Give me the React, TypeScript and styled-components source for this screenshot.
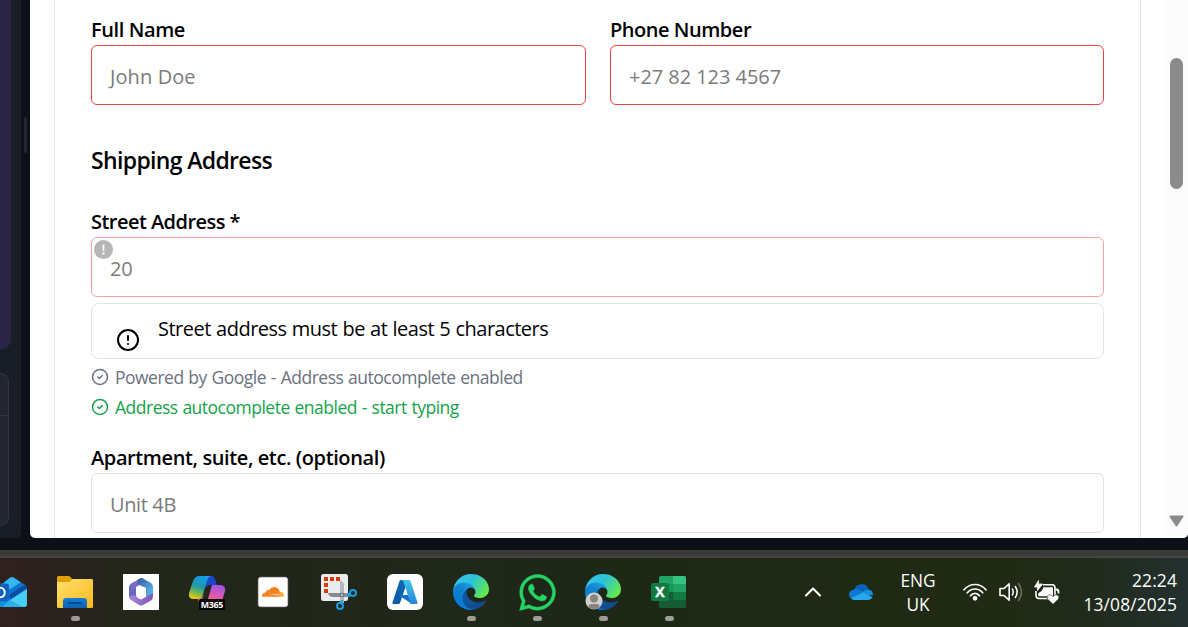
import React from 'react';
import styled, { createGlobalStyle } from 'styled-components';
import { CircleAlert, CircleCheck, ChevronUp } from 'lucide-react';
import { FaWhatsapp } from 'react-icons/fa';

const Global = createGlobalStyle`
  * { box-sizing: border-box; }
  body { margin: 0; background: #0e1018; overflow: hidden; }
  #root { font-family: "Open Sans", "Noto Sans", sans-serif; }
`;

const Screen = styled.div`
  width: 1188px;
  height: 627px;
  display: flex;
  flex-direction: column;
  background: #0e1018;
  overflow: hidden;
`;
const Workspace = styled.div`
  display: flex;
  height: 538px;
`;
const ChatRail = styled.aside`
  width: 21px;
  height: 538px;
  background: #191d25;
  border-bottom-right-radius: 5px;
  display: flex;
  flex-direction: column;
`;
const Message = styled.div`
  width: 11px;
  height: 350px;
  background: #2a2545;
  border-bottom-right-radius: 11px;
`;
const Composer = styled.div`
  width: 9px;
  height: 153px;
  margin-top: 23px;
  background: #23262e;
  border: 1px solid #333640;
  border-left: 0;
  border-radius: 0 11px 11px 0;
`;
const ComposerHead = styled.div`
  height: 42px;
  border-bottom: 1px solid #333640;
`;
const Splitter = styled.div`
  width: 9px;
  padding: 117px 3px 0;
`;
const Grip = styled.div`
  height: 36px;
  border-radius: 2px;
  background: #242630;
`;
const Preview = styled.main`
  flex: 1;
  display: flex;
  background: #fff;
  border-radius: 0 0 5px 5px;
  overflow: hidden;
`;
const PreviewBody = styled.div`
  width: 1135px;
  padding: 0 24px;
`;
const Card = styled.section`
  width: 1087px;
  height: 538px;
  padding: 15px 36px 0;
  border: 1px solid #e4e4e7;
  border-width: 0 1px;
  overflow: hidden;
`;
const Columns = styled.div`
  display: grid;
  grid-template-columns: 495px 494px;
  gap: 24px;
`;
const Field = styled.div`
  display: flex;
  flex-direction: column;
`;
const Label = styled.label<{ $track?: number }>`
  height: 30px;
  line-height: 29px;
  font-size: 20px;
  font-weight: 600;
  letter-spacing: ${p => p.$track ?? 0}px;
  color: #020204;
  white-space: nowrap;
`;
const Box = styled.div<{ $tone?: string; $track?: number }>`
  height: 60px;
  display: flex;
  align-items: center;
  padding: 2px 18px 0;
  border: 1px solid ${p => p.$tone ?? '#e4e4e7'};
  border-radius: 6px;
  font-size: 20px;
  letter-spacing: ${p => p.$track ?? 0}px;
  color: #7b7b7b;
  white-space: nowrap;
  position: relative;
`;
const Badge = styled.span`
  position: absolute;
  left: 2px;
  top: 2px;
  width: 19px;
  height: 19px;
  svg { display: block; }
`;
const Heading = styled.h3`
  margin: 38px 0 28px;
  height: 36px;
  line-height: 35px;
  font-size: 23px;
  font-weight: 600;
  letter-spacing: -0.65px;
  color: #020204;
  white-space: nowrap;
`;
const Alert = styled.div`
  height: 56px;
  margin-top: 6px;
  padding: 0 24px;
  border: 1px solid #e4e4e7;
  border-radius: 8px;
  display: flex;
  gap: 18px;
  font-size: 20px;
  letter-spacing: -0.5px;
  word-spacing: 0.5px;
  line-height: 50px;
  color: #020204;
  white-space: nowrap;
  svg { margin-top: 24px; }
`;
const Hints = styled.div`
  padding: 3px 0 21px;
`;
const Hint = styled.div<{ $tone: string }>`
  height: 30px;
  display: flex;
  align-items: center;
  gap: 6px;
  font-size: 17.5px;
  letter-spacing: -0.5px;
  word-spacing: 0.7px;
  color: ${p => p.$tone};
  white-space: nowrap;
`;
const Scrollbar = styled.div`
  width: 23px;
  background: #fcfcfc;
  display: flex;
  flex-direction: column;
  align-items: center;
  justify-content: space-between;
  padding: 58px 0 11px;
`;
const Thumb = styled.div`
  width: 13px;
  height: 131px;
  border-radius: 7px;
  background: #8b8b8b;
`;
const WindowEdge = styled.div`
  height: 8px;
  margin-top: 12px;
  background: linear-gradient(#3a3a39 0 6px, #454643 6px 8px);
`;
const Taskbar = styled.footer`
  height: 69px;
  display: flex;
  justify-content: space-between;
  background: linear-gradient(90deg, #31211e 0, #2a221d 60px, #24251b 110px, #22271a 180px, #21261b 300px, #1f2819 450px, #1e2816 650px, #1f2913 900px, #202a14 1010px, #212b1c 1090px, #22302f 1188px);
  color: #fff;
`;
const Apps = styled.div`
  display: flex;
  margin-left: -24px;
`;
const AppSlot = styled.div`
  width: 66px;
  padding-top: 16px;
  display: flex;
  flex-direction: column;
  align-items: center;
  gap: 6px;
  svg { display: block; overflow: visible; }
`;
const WhatsApp = styled(FaWhatsapp)`
  margin: -2.5px 0;
  color: #25d366;
  stroke: #25d366;
  stroke-width: 6px;
`;
const Running = styled.i`
  width: 9px;
  height: 5px;
  border-radius: 3px;
  background: #9d9b97;
`;
const Tray = styled.div`
  display: flex;
  align-items: center;
  height: 68px;
  padding-right: 11px;
`;
const TrayItem = styled.div<{ $w: number; $gap: number }>`
  width: ${p => p.$w}px;
  margin-right: ${p => p.$gap}px;
  display: flex;
  justify-content: center;
  svg { display: block; overflow: visible; flex: none; }
`;
const TrayText = styled.div<{ $w: number; $gap?: number; $top?: number; $align: string; $size: number; $track?: number }>`
  width: ${p => p.$w}px;
  margin-right: ${p => p.$gap ?? 0}px;
  padding-top: ${p => p.$top ?? 0}px;
  text-align: ${p => p.$align};
  font-size: ${p => p.$size}px;
  letter-spacing: ${p => p.$track ?? 0}px;
  line-height: 24px;
  white-space: nowrap;
`;

const Outlook = () => (
  <svg width="36" height="36" viewBox="0 0 36 36">
    <path d="M6 14 18 4.500Q21 2 24 4.500L34 11Q36 12.500 36 15V30Q36 33 33 33H9Q6 33 6 30Z" fill="#1490df" />
    <path d="M10 11 18 4.500Q21 2 24 4.500L30 8.500 19 15.500 17 11Z" fill="#35b8f1" />
    <path d="M30 8.500 34 11Q36 12.500 36 14.500L19 26 18 20Z" fill="#0a4da2" />
    <path d="M18 16 29 8.800 34 10.500 18 21Z" fill="#0f74cf" />
    <path d="M36 15V30Q36 33 33 33H12L19 26Z" fill="#46cdf8" />
    <path d="M19 26 32 33H12Z" fill="#2cb0ec" />
    <rect x="0" y="9.500" width="18" height="18" rx="2.500" fill="#0f62c4" />
    <ellipse cx="9.500" cy="18.500" rx="4.200" ry="4.800" fill="none" stroke="#fff" strokeWidth="2" />
  </svg>
);
const Folder = () => (
  <svg width="36" height="36" viewBox="0 0 36 36">
    <defs>
      <linearGradient id="fo" x1="0" y1="0" x2="1" y2="1"><stop stopColor="#ffdf6e" /><stop offset="1" stopColor="#fbb91b" /></linearGradient>
      <linearGradient id="fb" x1="0" y1="0" x2="0" y2="1"><stop stopColor="#157fd8" /><stop offset="1" stopColor="#0d62b2" /></linearGradient>
    </defs>
    <path d="M0 3.500Q0 2 1.500 2H11Q12.500 2 13.500 3L15 5H34Q36 5 36 7V16H0Z" fill="#e0a105" />
    <path d="M0 8H12L16 5H34.500Q36 5 36 6.500V32.500Q36 34 34.500 34H1.500Q0 34 0 32.500Z" fill="url(#fo)" />
    <path d="M6 34V27Q6 24 9 24H27Q30 24 30 27V34Z" fill="url(#fb)" />
    <path d="M11.500 29H24.500" stroke="#08488f" strokeWidth="1.800" strokeLinecap="round" />
  </svg>
);
const Office = () => (
  <svg width="36" height="36" viewBox="0 0 36 36">
    <defs>
      <linearGradient id="o1" x1="0" y1="0" x2="0" y2="1"><stop stopColor="#8e72cf" /><stop offset="1" stopColor="#4d62b4" /></linearGradient>
      <linearGradient id="o2" x1="0" y1="0" x2="1" y2="1"><stop stopColor="#3a58a8" /><stop offset="1" stopColor="#5ac6ef" /></linearGradient>
      <linearGradient id="o3" x1="0" y1="0" x2="1" y2="0"><stop stopColor="#a986dd" /><stop offset="1" stopColor="#7d55b8" /></linearGradient>
    </defs>
    <path d="M36 0H0V36H36Z" fill="#fff" />
    <path d="M18 4 8 9.500Q6 11 6 13V23L13 27V13L21 8.500V5Q19.500 3.500 18 4Z" fill="url(#o1)" />
    <path d="M15 5.500 18 4Q19 4 20 4.500L28 9Q30 10.500 30 13V21L23 24V14L14 10Z" fill="url(#o2)" />
    <path d="M6 22Q6 25 8 26L16 31Q18 32 20 31L28 26.500Q30 25 30 22V19L19 25Q17 26 15 24L12 21Z" fill="url(#o3)" />
    <circle cx="18" cy="17.700" r="5" fill="#fff" />
  </svg>
);
const Copilot = () => (
  <svg width="36" height="36" viewBox="0 0 36 36">
    <defs>
      <linearGradient id="c1" x1="0.600" y1="0" x2="0.300" y2="1"><stop stopColor="#159bea" /><stop offset="0.450" stopColor="#2098a8" /><stop offset="0.750" stopColor="#75bd48" /><stop offset="1" stopColor="#f4c916" /></linearGradient>
      <linearGradient id="c2" x1="0.700" y1="0" x2="0.300" y2="1"><stop stopColor="#a553e6" /><stop offset="0.500" stopColor="#e35aa5" /><stop offset="1" stopColor="#ff8d5c" /></linearGradient>
    </defs>
    <path d="M17 2H22Q25 2 26 5L28 11H22Q19 11 18 15L14 10Z" fill="#1b46c9" />
    <path d="M11 2H22Q19 3 18 7L14 20Q13 25 9 25H5Q-1 25 0 19L4 7Q6 2 11 2Z" fill="url(#c1)" />
    <path d="M22 11H31Q37 11 36 17L33 27Q31 33 26 33H14Q11 33 9 25 13 25 15 20L18 13Q18 11 22 11Z" fill="url(#c2)" />
    <path d="M20 11H23L19 25H13Q14 24 15 20L17 14Q18 11 20 11Z" fill="#25261e" />
    <rect x="10" y="25" width="26" height="11" rx="1.500" fill="#050505" />
    <text x="23" y="33.700" textAnchor="middle" fontFamily="Open Sans, sans-serif" fontWeight="700" fontSize="8.800" fill="#fff" textLength="22.500">M365</text>
  </svg>
);
const Cloudflare = () => (
  <svg width="36" height="36" viewBox="0 0 36 36">
    <rect x="3.300" y="3.300" width="29.400" height="29.400" rx="2.500" fill="#fff" stroke="#d5d5d3" strokeWidth="0.600" />
    <path d="M7 22.800Q7 18.500 11 18.200 11 15.500 14 16.200 16 13 19 13 23 13 24.500 17L25.500 20 24 22.800Z" fill="#f48120" />
    <path d="M23 22.800 25 17.500Q29 18 29 22.800Z" fill="#faad3f" />
    <path d="M13 20.500 24 20 22.500 21.200Z" fill="#fff" opacity="0.750" />
  </svg>
);
const Snip = () => (
  <svg width="36" height="36" viewBox="0 0 36 36">
    <rect x="0" y="0" width="27" height="27" rx="2.500" fill="#e9ebef" />
    <path d="M3 3h4v4h-4zM9 3h4v4h-4zM15 3h4v4h-4zM3 9h4v4h-4zM3 15h4v4h-4z" fill="#d83b01" />
    <path d="M20 7Q23 8 23 11V29H19V7Z" fill="#b4b8be" />
    <path d="M7 19H29V23H12Q8 23 7 19Z" fill="#858c94" />
    <path d="M19 19h4v4h-4z" fill="#70777f" />
    <circle cx="21" cy="21" r="0.900" fill="#e3e5e8" />
    <path d="M26 21.500 29 20.500M21 26V28.500" stroke="#1b9be3" strokeWidth="2.500" />
    <circle cx="32" cy="19" r="3" fill="none" stroke="#1b9be3" strokeWidth="2" />
    <circle cx="19" cy="32" r="3" fill="none" stroke="#1b9be3" strokeWidth="2" />
  </svg>
);
const Azure = () => (
  <svg width="36" height="36" viewBox="0 0 36 36">
    <defs>
      <linearGradient id="a1" x1="0" y1="0" x2="0" y2="1"><stop stopColor="#1268b4" /><stop offset="1" stopColor="#0b5aa6" /></linearGradient>
      <linearGradient id="a2" x1="0" y1="0" x2="0" y2="1"><stop stopColor="#3fc5ee" /><stop offset="1" stopColor="#2487d8" /></linearGradient>
    </defs>
    <rect width="36" height="36" rx="6" fill="#fff" />
    <path d="M14 6H21L13 29Q12.500 30 11.500 30H6.500Q5 30 5.500 28.500L12.500 7Q13 6 14 6Z" fill="url(#a1)" />
    <path d="M12 21H21L25 30 13 22Z" fill="#0f6fc4" />
    <path d="M14.500 6H21.500Q23 6 23.500 7.200L30.500 28.500Q31 30 29.500 30H22.500Q24 29.500 23.300 28L16.500 8Q16 6.500 14.500 6Z" fill="url(#a2)" />
  </svg>
);
const Edge = ({ id, profile }: { id: string; profile?: boolean }) => (
  <svg width="36" height="36" viewBox="0 0 36 36">
    <defs>
      <linearGradient id={id + 'a'} x1="0.200" y1="0" x2="1" y2="0.400"><stop stopColor="#0c59a4" /><stop offset="1" stopColor="#114a8b" /></linearGradient>
      <linearGradient id={id + 'b'} x1="0.800" y1="0.200" x2="0.200" y2="1"><stop stopColor="#1b9de2" /><stop offset="0.300" stopColor="#1384ce" /><stop offset="1" stopColor="#0078d8" /></linearGradient>
      <linearGradient id={id + 'c'} x1="0" y1="0.200" x2="1" y2="0.700"><stop stopColor="#35c1f1" /><stop offset="0.450" stopColor="#2cc3d5" /><stop offset="1" stopColor="#66eb43" /></linearGradient>
    </defs>
    <g transform="scale(0.1406)">
      <path fill={`url(#${id}a)`} d="M230.330 190.460c-3.400 1.800-6.900 3.360-10.500 4.700a101.700 101.700 0 0 1-35.900 6.460c-47.300 0-88.500-32.540-88.500-74.300a31.480 31.480 0 0 1 16.430-27.300c-42.800 1.800-53.800 46.400-53.800 72.530 0 73.880 68.090 81.370 82.760 81.370 7.910 0 19.840-2.300 27-4.560l1.310-.44a128.340 128.340 0 0 0 66.600-52.800 4 4 0 0 0-5.400-5.660z" />
      <path fill={`url(#${id}b)`} d="M105.730 241.420a79.200 79.200 0 0 1-22.740-21.340 80.720 80.720 0 0 1 28.870-120.040c3.120-1.470 8.450-4.130 15.540-4a32.350 32.350 0 0 1 25.690 13 31.880 31.880 0 0 1 6.360 18.660c0-.21 24.460-79.600-80-79.600-43.900 0-79.450 41.660-79.450 78.210a130.150 130.150 0 0 0 12.110 56 128 128 0 0 0 156.380 67.110 75.550 75.550 0 0 1-62.760-8z" />
      <path fill={`url(#${id}c)`} d="M152.330 148.860c-.81 1.050-3.300 2.500-3.300 5.660 0 2.610 1.700 5.120 4.720 7.230 14.380 10 41.490 8.680 41.560 8.680a59.560 59.560 0 0 0 30.270-8.350 61.380 61.380 0 0 0 30.430-52.880c.26-22.410-8-37.310-11.340-43.910C223.460 23.840 177.720 0 128 0A128 128 0 0 0 0 126.200c.48-36.540 36.800-66.050 80-66.050 3.500 0 23.460.34 42 10.070 16.340 8.580 24.900 18.940 30.850 29.210 6.180 10.670 7.280 24.150 7.280 29.520 0 5.370-2.740 13.330-7.800 19.910z" />
    </g>
    {profile && (
      <g>
        <circle cx="9" cy="27" r="8.500" fill="#d2d0ce" />
        <circle cx="9" cy="24.500" r="4" fill="#8a8480" />
        <path d="M3.500 33.200Q3.500 30 6 30H12Q14.500 30 14.500 33.200 9 37 3.500 33.200Z" fill="#8a8480" />
      </g>
    )}
  </svg>
);
const Excel = () => (
  <svg width="36" height="36" viewBox="0 0 36 36">
    <path d="M10 2H22V10H8V4Q8 2 10 2Z" fill="#21a366" />
    <path d="M22 2H33.500Q35 2 35 3.500V10H22Z" fill="#33c481" />
    <path d="M8 10H22V18H8Z" fill="#1b9659" />
    <path d="M22 10H35V18H22Z" fill="#21a366" />
    <path d="M8 18H22V26H8Z" fill="#185c37" />
    <path d="M22 18H35V26H22Z" fill="#107c41" />
    <path d="M8 26H35V32.500Q35 34 33.500 34H9.500Q8 34 8 32.500Z" fill="#185c37" />
    <rect x="0" y="9" width="18" height="18" rx="1.500" fill="#10793f" />
    <text x="9" y="22.900" textAnchor="middle" fontFamily="Open Sans, sans-serif" fontWeight="700" fontSize="14" fill="#fff" stroke="#fff" strokeWidth="0.400">X</text>
  </svg>
);
const OneDrive = () => (
  <svg width="24" height="16" viewBox="0 0 24 16">
    <path d="M5 6Q7 0 13 0 18 0 20 6L14 10Z" fill="#0a62ba" />
    <path d="M5 5.500Q9 4.500 12 7L18 10 4 15.500Q0 14 0 10.500 0 6.500 5 5.500Z" fill="#0f78d4" />
    <path d="M12 8.500 17 6Q24 5 24 11 L16 12Z" fill="#1490df" />
    <path d="M2 14 14 8.800 23.500 13Q22 16 19 16H5.500Q3 16 2 14Z" fill="#28a8ea" />
  </svg>
);
const Wifi = () => (
  <svg width="24" height="18" viewBox="0 0 24 18" fill="none" stroke="#fff" strokeWidth="1.700" strokeLinecap="round">
    <path d="M1 6.800Q5.500 1.500 12 1.500T23 6.800" />
    <path d="M4.300 9.800Q7.500 6 12 6T19.700 9.800" />
    <path d="M7.500 12.700Q9.200 10.400 12 10.400T16.500 12.700" />
    <circle cx="12" cy="15.300" r="1.500" fill="#fff" />
  </svg>
);
const Volume = () => (
  <svg width="24" height="20" viewBox="0 0 24 20" fill="none" stroke="#fff" strokeWidth="1.600" strokeLinecap="round" strokeLinejoin="round">
    <path d="M1 6.500H5L10.200 1.800V18.200L5 13.500H1Z" />
    <path d="M13.500 7Q15 10 13.500 13" />
    <path d="M16.300 4.500Q20 10 16.300 15.500" />
    <path d="M19.500 1.500Q25.500 10 19.500 18.500" stroke="#6a705f" />
  </svg>
);
const Battery = () => (
  <svg width="26" height="24" viewBox="0 0 26 24">
    <path d="M9 4.800H18Q21 4.800 21 8V15Q21 18.500 18 18.500H5Q2 18.500 2 15V11" fill="none" stroke="#fff" strokeWidth="1.600" />
    <path d="M9.500 7.200H18Q19 7.200 19 8.500V16.200H4.300V13Q8 12 9.500 7.200Z" fill="#fff" />
    <path d="M21.500 9.500H22.500Q24.500 9.500 24.500 12V13.500" stroke="#fff" strokeWidth="1.800" fill="none" />
    <path d="M4.500 0.500V4H8.500L3.500 10.500V7H0.500Z" fill="#fff" stroke="#fff" strokeWidth="0.800" strokeLinejoin="round" />
    <path d="M19 24.300 13.500 19Q12.300 16.300 14.500 15 17 14 19 16.700 21 14 23.500 15 25.700 16.300 24.500 19Z" fill="#fff" stroke="#202a17" strokeWidth="0.600" />
  </svg>
);

const App = () => (
  <Screen>
    <Global />
    <Workspace>
      <ChatRail>
        <Message />
        <Composer><ComposerHead /></Composer>
      </ChatRail>
      <Splitter><Grip /></Splitter>
      <Preview>
        <PreviewBody>
          <Card>
            <Columns>
              <Field>
                <Label $track={-0.4}>Full Name</Label>
                <Box $tone="#ef4444" $track={0.1}>John Doe</Box>
              </Field>
              <Field>
                <Label $track={-0.47}>Phone Number</Label>
                <Box $tone="#ef4444" $track={-0.05}>+27 82 123 4567</Box>
              </Field>
            </Columns>
            <Heading>Shipping Address</Heading>
            <Field>
              <Label $track={-0.54}>Street Address *</Label>
              <Box $tone="#f7a1a1" $track={-0.3}>
                <Badge>
                  <svg width="19" height="19" viewBox="0 0 19 19">
                    <circle cx="9.500" cy="9.500" r="9.500" fill="#b6b6b6" />
                    <path d="M8.500 4.500H10.500L10.200 11H8.800ZM8.500 12.500H10.500V14.500H8.500Z" fill="#fff" />
                  </svg>
                </Badge>
                20
              </Box>
              <Alert>
                <CircleAlert size={24} strokeWidth={2} />
                <span>Street address must be at least 5 characters</span>
              </Alert>
            </Field>
            <Hints>
              <Hint $tone="#6b7280"><CircleCheck size={18} />Powered by Google - Address autocomplete enabled</Hint>
              <Hint $tone="#16a34a"><CircleCheck size={18} />Address autocomplete enabled - start typing</Hint>
            </Hints>
            <Field>
              <Label $track={-0.39}>Apartment, suite, etc. (optional)</Label>
              <Box $track={-0.37}>Unit 4B</Box>
            </Field>
          </Card>
        </PreviewBody>
        <Scrollbar>
          <Thumb />
          <svg width="15" height="12" viewBox="0 0 15 12">
            <path d="M1.500 1.500H13.500L7.500 10.500Z" fill="#8b8b8b" stroke="#8b8b8b" strokeWidth="2" strokeLinejoin="round" />
          </svg>
        </Scrollbar>
      </Preview>
    </Workspace>
    <WindowEdge />
    <Taskbar>
      <Apps>
        <AppSlot><Outlook /></AppSlot>
        <AppSlot><Folder /><Running /></AppSlot>
        <AppSlot><Office /></AppSlot>
        <AppSlot><Copilot /></AppSlot>
        <AppSlot><Cloudflare /></AppSlot>
        <AppSlot><Snip /></AppSlot>
        <AppSlot><Azure /></AppSlot>
        <AppSlot><Edge id="e1" /><Running /></AppSlot>
        <AppSlot><WhatsApp size={41} /><Running /></AppSlot>
        <AppSlot><Edge id="e2" profile /><Running /></AppSlot>
        <AppSlot><Excel /><Running /></AppSlot>
      </Apps>
      <Tray>
        <TrayItem $w={24} $gap={24}><ChevronUp size={28} strokeWidth={1.8} /></TrayItem>
        <TrayItem $w={24} $gap={27}><OneDrive /></TrayItem>
        <TrayText $w={36} $gap={27} $top={2} $align="center" $size={17.3}>ENG<br />UK</TrayText>
        <TrayItem $w={24} $gap={12}><Wifi /></TrayItem>
        <TrayItem $w={24} $gap={11}><Volume /></TrayItem>
        <TrayItem $w={26} $gap={23}><Battery /></TrayItem>
        <TrayText $w={94} $align="right" $size={17.4} $track={0.12}>22:24<br />13/08/2025</TrayText>
      </Tray>
    </Taskbar>
  </Screen>
);
export default App;
